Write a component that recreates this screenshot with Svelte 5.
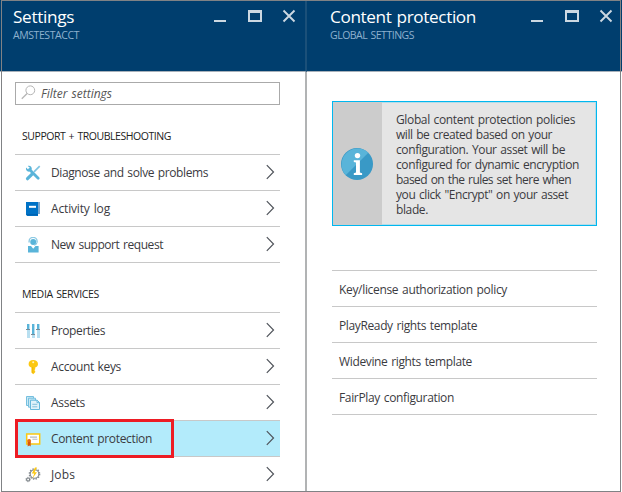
<script>
  const support = [
    { icon: 'tools', label: 'Diagnose and solve problems', w: 157 },
    { icon: 'book', label: 'Activity log', w: 59 },
    { icon: 'person', label: 'New support request', w: 112 }
  ];
  const media = [
    { icon: 'sliders', label: 'Properties', w: 54 },
    { icon: 'key', label: 'Account keys', w: 70 },
    { icon: 'files', label: 'Assets', w: 34 },
    { icon: 'certificate', label: 'Content protection', w: 101, selected: true },
    { icon: 'gear', label: 'Jobs', w: 24 }
  ];
  const policies = [
    { label: 'Key/license authorization policy', w: 168 },
    { label: 'PlayReady rights template', w: 138 },
    { label: 'Widevine rights template', w: 133 },
    { label: 'FairPlay configuration', w: 115 }
  ];
  const notice = [
    { label: 'Global content protection policies', w: 179 },
    { label: 'will be created based on your', w: 156 },
    { label: 'configuration. Your asset will be', w: 169 },
    { label: 'configured for dynamic encryption', w: 183 },
    { label: 'based on the rules set here when', w: 175 },
    { label: 'you click "Encrypt" on your asset', w: 172 },
    { label: 'blade.', w: 32 }
  ];

  function fit(node, width) {
    const natural = node.getBoundingClientRect().width;
    node.style.letterSpacing = (width - natural) / node.textContent.length + 'px';
  }
</script>

{#snippet controls()}
  <svg class="controls" width="82" height="14" viewBox="0 0 82 14">
    <path d="M0 11h12v2H0z" fill="#ccd8e2" />
    <path d="M34 1h14v12H34zM36 4v7h10V4z" fill="#ccd8e2" fill-rule="evenodd" />
    <path d="M69.5 1.5l11 11M80.5 1.5l-11 11" stroke="#ccd8e2" stroke-width="1.9" />
  </svg>
{/snippet}

{#snippet glyph(name)}
  <svg class="glyph" width="16" height="16" viewBox="0 0 16 16">
    {#if name === 'tools'}
      <path d="M4.5 4.5L13.2 13.2" stroke="#59b4d9" stroke-width="2.8" stroke-linecap="round" />
      <path d="M2.8 .9L5 3.1 3.4 4.8 1.1 2.6C.3 4.9 2 7.1 4.5 6.6L6.8 4.3C7.2 2 5 .1 2.8.9z" fill="#59b4d9" />
      <path d="M14.7 1.1L9 6.9" stroke="#7fc4e1" stroke-width="1.7" />
      <path d="M7.1 9.1l-4.6 4.6" stroke="#59b4d9" stroke-width="3.2" stroke-linecap="round" />
    {:else if name === 'book'}
      <path d="M3 1h12v12H3z" fill="#7ba7cf" />
      <path d="M1 1h12v14H2.3L1 13.8z" fill="#0072c6" />
      <path d="M1.6 13.7H13" stroke="#0060ae" />
      <path d="M4 4.8h7v2H4z" fill="#fff" />
    {:else if name === 'person'}
      <path d="M4.1 5.5V4.4a4 4 0 0 1 8 0v1.1" fill="none" stroke="#8dcae4" stroke-width="1.4" />
      <circle cx="8.2" cy="5" r="3" fill="#59b4d9" />
      <path d="M12 5.5q0 2.6-3 2.6" fill="none" stroke="#7fc4e1" />
      <path d="M3 9h3l2.2 2.8L10.5 9H13.6v6.5H3z" fill="#59b4d9" />
    {:else if name === 'sliders'}
      <path d="M2 1h2v5H2zM7 1h2v10H7zM12 1h2v5h-2z" fill="#59b4d9" />
      <path d="M2 7h3v8H2zM7 12h3v3H7zM12 7h3v8h-3zM4 1h1v5H4zM9 1h1v10H9zM14 1h1v5h-1z" fill="#b8dff0" />
      <path d="M1 6.5h4M6 11.5h4M11 6.5h4" stroke="#778c99" stroke-width="1" />
    {:else if name === 'key'}
      <path d="M8.2 1C5.5 1 3.6 2.7 3.6 4.9c0 1.7 1 3 2.8 3.6v5.1L8.2 15.3l2-2V12l-.8-.8.8-1V8.5c1.7-.6 2.8-1.9 2.8-3.6C13 2.7 10.8 1 8.2 1z" fill="#fcc812" />
      <circle cx="8.2" cy="3.2" r="1" fill="#fff3bd" />
      <path d="M7.7 8v6" stroke="#e7ad0b" stroke-width=".7" />
    {:else if name === 'files'}
      <path d="M1.5 1.5h7v9h-7z" fill="#c9e9f5" stroke="#75bfdf" />
      <path d="M3.5 3.2h7v9h-7z" fill="#c9e9f5" stroke="#75bfdf" />
      <path d="M5.5 5.2h6.7l2.3 2.3v7h-9z" fill="#e0f3fa" stroke="#65b8db" />
      <path d="M12 5v2.7h2.7" fill="none" stroke="#65b8db" />
      <path d="M7.3 9.3h5M7.3 11.8h5" stroke="#82bed9" />
    {:else if name === 'certificate'}
      <path d="M1.7 3h13v9.9h-13z" fill="#fff" stroke="#fcc812" stroke-width="1.5" />
      <path d="M5 6.1h7M7.4 8.3h5" stroke="#b6b9bd" stroke-width="1.1" />
      <circle cx="4.1" cy="10" r="2" fill="#e76a10" />
      <path d="M2.7 11h3v4.5l-1.5-1-1.5 1z" fill="#d95309" />
    {:else}
      <circle cx="9.5" cy="7" r="4.3" fill="none" stroke="#858b90" stroke-width="1.1" />
      <circle cx="9.5" cy="7" r="5.2" fill="none" stroke="#858b90" stroke-width="1.3" stroke-dasharray="1.4 1.32" />
      <circle cx="3.1" cy="12.5" r="1.5" fill="none" stroke="#777e83" stroke-width="1.1" />
      <circle cx="3.1" cy="12.5" r="2.2" fill="none" stroke="#777e83" stroke-width=".8" stroke-dasharray=".9 .83" />
      <path d="M10 .6L6.8 6.5h2.5L7.4 11.6 12 5.3H9.5L12 .6z" fill="#fcc812" />
    {/if}
  </svg>
{/snippet}

{#snippet menu(items)}
  <ul class="menu">
    {#each items as item}
      <li class:selected={item.selected}>
        {@render glyph(item.icon)}
        <span class="label"><span use:fit={item.w}>{item.label}</span></span>
        <svg class="chevron" width="9" height="16" viewBox="0 0 9 16">
          <path d="M.8 1.2L7.5 8 .8 14.8" fill="none" stroke="#50545b" stroke-width="1.2" />
        </svg>
      </li>
    {/each}
  </ul>
{/snippet}

<main>
  <section class="blade settings">
    <header>
      <div>
        <h1><span use:fit={61}>Settings</span></h1>
        <p><span use:fit={66}>AMSTESTACCT</span></p>
      </div>
      {@render controls()}
    </header>
    <div class="content">
      <div class="filter">
        <svg width="15" height="15" viewBox="0 0 15 15">
          <circle cx="9.3" cy="5.3" r="4.4" fill="none" stroke="#b5b5b5" />
          <path d="M6.1 8.5L.8 13.8" stroke="#b5b5b5" stroke-width="1.3" />
        </svg>
        <em><span use:fit={71}>Filter settings</span></em>
      </div>
      <h2 class="first"><span use:fit={149}>SUPPORT + TROUBLESHOOTING</span></h2>
      {@render menu(support)}
      <h2 class="second"><span use:fit={77}>MEDIA SERVICES</span></h2>
      {@render menu(media)}
    </div>
  </section>

  <section class="blade protection">
    <header>
      <div>
        <h1><span use:fit={146}>Content protection</span></h1>
        <p><span use:fit={84}>GLOBAL SETTINGS</span></p>
      </div>
      {@render controls()}
    </header>
    <div class="content">
      <div class="notice">
        <div class="badge">
          <svg width="32" height="32" viewBox="0 0 32 32">
            <circle cx="16" cy="16" r="16" fill="#3999c6" />
            <path d="M4.7 27.3A16 16 0 0 1 27.3 4.7z" fill="#59b4d9" />
            <circle cx="16.5" cy="7.6" r="2.7" fill="#fff" />
            <path d="M12.8 12.3h6.1v12.1l2.2.9V27h-8.3v-1.7l2.2-.9V14.6l-2.2-.6z" fill="#fff" />
          </svg>
        </div>
        <div class="message">
          {#each notice as line}
            <div><span use:fit={line.w}>{line.label}</span></div>
          {/each}
        </div>
      </div>
      <ul class="policies">
        {#each policies as item}
          <li><span use:fit={item.w}>{item.label}</span></li>
        {/each}
      </ul>
    </div>
  </section>
  <div class="frame"></div>
  <div class="highlight"></div>
</main>

<style>
  :global(body) { margin: 0; background: #fff; }
  main {
    position: relative;
    display: flex;
    width: 622px;
    height: 492px;
    overflow: hidden;
    background: #fff;
    color: #3b3b3f;
    font: 12px/16px "Open Sans", "Noto Sans", sans-serif;
    word-spacing: 1px;
  }
  span { white-space: nowrap; }
  h1, h2, p, ul { margin: 0; padding: 0; font-weight: 400; }
  li { list-style: none; }
  .blade { box-sizing: border-box; height: 492px; }
  .settings { width: 307px; border-right: 2px solid #b1b3b4; }
  .protection { width: 315px; }
  header {
    box-sizing: border-box;
    display: flex;
    justify-content: space-between;
    height: 72px;
    padding: 6px 9px 0 13px;
    background: #003e6e;
    border-bottom: 1px solid #a8b1ba;
    color: #fff;
  }
  .settings header { margin-right: -2px; border-right: 2px solid #1b5079; }
  .protection header { padding: 6px 9px 0 23px; }
  h1 { font-size: 17.2px; line-height: 22px; }
  header p { font-size: 10.5px; line-height: 14px; color: #8eb1ce; }
  .controls { margin-top: 3px; }
  .settings .content { width: 265px; padding: 10px 0 0 15px; }
  .filter {
    box-sizing: border-box;
    display: flex;
    align-items: center;
    gap: 5px;
    height: 23px;
    padding-left: 5px;
    border: 1px solid #aaa;
    color: #555;
  }
  .filter svg { margin-top: -2px; }
  h2 { padding-left: 7px; font-size: 10.5px; line-height: 16px; color: #222; }
  .first { margin: 23px 0 10px; }
  .second { margin: 23px 0 10px; }
  .menu li {
    box-sizing: border-box;
    display: flex;
    align-items: center;
    height: 36px;
    padding: 0 5px 0 10px;
    border-top: 1px solid #c8c8c8;
  }
  .menu:first-of-type { border-bottom: 1px solid #c8c8c8; }
  .glyph { margin-right: 10px; }
  .label { flex: 1; padding-top: 1px; }
  .chevron { margin-top: -1px; }
  .selected { background: #b3ebfb; }
  .protection .content { width: 265px; padding: 29px 0 0 25px; }
  .notice {
    box-sizing: border-box;
    display: flex;
    height: 125px;
    border: 1px solid #00b7ef;
    background: #e5e5e5;
    box-shadow: inset -1px 1px #b6dce8, inset 0 -1px #b6dce8;
  }
  .badge { display: flex; box-sizing: border-box; width: 49px; padding-right: 2px; align-items: center; justify-content: center; background: #ccc; }
  .message { padding: 10px 0 0 14px; line-height: 15px; }
  .policies { margin-top: 44px; border-bottom: 1px solid #c8c8c8; }
  .policies li {
    box-sizing: border-box;
    height: 36px;
    padding-left: 7px;
    border-top: 1px solid #c8c8c8;
    line-height: 37px;
  }
  .frame {
    position: absolute;
    inset: 0 1px 0 1px;
    border: 1px solid #808285;
    pointer-events: none;
  }
  .highlight {
    position: absolute;
    box-sizing: border-box;
    left: 15px;
    top: 419px;
    width: 159px;
    height: 39px;
    border: 3px solid #ed1c24;
  }
</style>
